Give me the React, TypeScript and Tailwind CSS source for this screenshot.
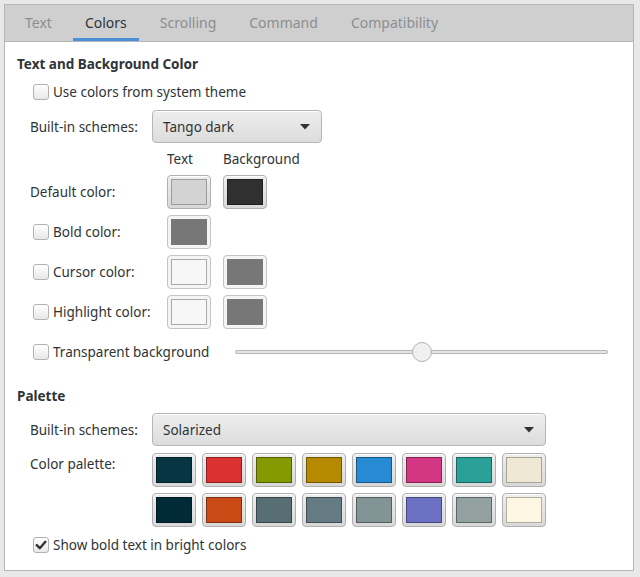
import React from "react";

function Check({ checked }: { checked?: boolean }) {
  return (
    <span className="w-[16px] h-[16px] rounded-[3px] border border-[#b1b3b3] bg-linear-to-b from-white to-[#e8e8e8] flex items-center justify-center shrink-0">
      {checked && (
        <svg width="12" height="12" viewBox="0 0 12 12">
          <path d="M1.8 6.2 L4.8 9.2 L10.4 2.8" stroke="#2e3436" strokeWidth="2.4" fill="none" strokeLinecap="round" strokeLinejoin="round" />
        </svg>
      )}
    </span>
  );
}

function Swatch({ color, edge, dim }: { color: string; edge: string; dim?: boolean }) {
  return (
    <div
      className={`w-[44px] h-[34px] rounded-[4px] border flex items-center justify-center shrink-0 ${
        dim
          ? "border-[#c4c4c4] bg-[#f4f4f4]"
          : "border-[#b0b0b0] bg-linear-to-b from-[#eeeeee] to-[#d8d8d8] shadow-[inset_0_1px_0_#ffffff]"
      }`}
    >
      <div className="w-[36px] h-[26px] border" style={{ backgroundColor: color, borderColor: edge }} />
    </div>
  );
}

function Dropdown({ text, width }: { text: string; width: string }) {
  return (
    <div
      className={`${width} h-[33px] rounded-[4px] border border-[#b6b6b6] bg-linear-to-b from-[#eeeeee] to-[#dcdcdc] shadow-[inset_0_1px_0_#ffffff] flex items-center justify-between pl-[10px] pr-[11px]`}
    >
      <span>{text}</span>
      <svg width="10" height="6" viewBox="0 0 10 6">
        <path d="M0 0 L10 0 L5 5.5 Z" fill="#2e3436" />
      </svg>
    </div>
  );
}

const palette1 = [
  ["#073642", "#04222a"],
  ["#dc322f", "#8a1f1d"],
  ["#859900", "#535f00"],
  ["#b58900", "#715500"],
  ["#268bd2", "#185783"],
  ["#d33682", "#842251"],
  ["#2aa198", "#1a655f"],
  ["#eee8d5", "#a8a496"],
];
const palette2 = [
  ["#002b36", "#001b22"],
  ["#cb4b16", "#7f2f0e"],
  ["#586e75", "#374549"],
  ["#657b83", "#3f4d52"],
  ["#839496", "#525d5e"],
  ["#6c71c4", "#44477b"],
  ["#93a1a1", "#5c6565"],
  ["#fdf6e3", "#b2ada0"],
];

const tabs = ["Text", "Colors", "Scrolling", "Command", "Compatibility"];

export default function App() {
  return (
    <div className="w-[640px] h-[577px] bg-[#e8e8e8] pt-[4px] px-[4px] font-['Noto_Sans',sans-serif] text-[13.5px] leading-[20px] text-[#2e3436]">
      <div className="w-[630px] h-[567px] border border-[#b6b6b6] bg-white flex flex-col">
        <div className="h-[37px] shrink-0 bg-[#cfcfcf] border-b border-[#b6b6b6] flex pl-[8px] gap-[9px] text-[14px]">
          {tabs.map((t) => (
            <div
              key={t}
              className={`h-[36px] px-[12px] flex items-center pt-[3px] border-b-[3px] ${
                t === "Colors" ? "border-[#4a90d9] text-[#2e3436]" : "border-transparent text-[#8b8e8f]"
              }`}
            >
              {t}
            </div>
          ))}
        </div>

        <div className="pl-[12px] pt-[12px] flex flex-col">
          <div className="h-[20px] font-bold">Text and Background Color</div>

          <div className="mt-[8px] h-[20px] flex items-center pl-[16px] gap-[4px]">
            <Check />
            <span>Use colors from system theme</span>
          </div>

          <div className="mt-[8px] h-[33px] flex items-center pl-[13px]">
            <span className="w-[122px]">Built-in schemes:</span>
            <Dropdown text="Tango dark" width="w-[170px]" />
          </div>

          <div className="mt-[6px] h-[20px] flex pl-[150px]">
            <span className="w-[56px]">Text</span>
            <span>Background</span>
          </div>

          <div className="mt-[6px] h-[34px] flex items-center pl-[13px]">
            <span className="w-[137px]">Default color:</span>
            <div className="flex gap-[12px]">
              <Swatch color="#d3d3d3" edge="#9c9c9c" />
              <Swatch color="#303030" edge="#1e1e1e" />
            </div>
          </div>

          <div className="mt-[6px] h-[34px] flex items-center pl-[13px]">
            <span className="w-[137px] flex items-center gap-[4px] pl-[3px]">
              <Check />
              <span>Bold color:</span>
            </span>
            <Swatch color="#777777" edge="#777777" dim />
          </div>

          <div className="mt-[6px] h-[34px] flex items-center pl-[13px]">
            <span className="w-[137px] flex items-center gap-[4px] pl-[3px]">
              <Check />
              <span>Cursor color:</span>
            </span>
            <div className="flex gap-[12px]">
              <Swatch color="#f7f7f7" edge="#ababab" dim />
              <Swatch color="#777777" edge="#777777" dim />
            </div>
          </div>

          <div className="mt-[6px] h-[34px] flex items-center pl-[13px]">
            <span className="w-[137px] flex items-center gap-[4px] pl-[3px]">
              <Check />
              <span>Highlight color:</span>
            </span>
            <div className="flex gap-[12px]">
              <Swatch color="#f7f7f7" edge="#ababab" dim />
              <Swatch color="#777777" edge="#777777" dim />
            </div>
          </div>

          <div className="mt-[6px] h-[34px] flex items-center pl-[13px]">
            <span className="w-[205px] flex items-center gap-[4px] pl-[3px]">
              <Check />
              <span>Transparent background</span>
            </span>
            <div className="relative w-[373px] h-[20px] flex items-center">
              <div className="w-full h-[4px] rounded-full border border-[#b6b6b6] bg-[#e4e4e4]" />
              <div className="absolute left-[177px] top-0 w-[20px] h-[20px] rounded-full border border-[#b3b3b3] bg-[#f0f0f0]" />
            </div>
          </div>

          <div className="mt-[17px] h-[20px] font-bold">Palette</div>

          <div className="mt-[7px] h-[33px] flex items-center pl-[13px]">
            <span className="w-[122px]">Built-in schemes:</span>
            <Dropdown text="Solarized" width="w-[394px]" />
          </div>

          <div className="mt-[7px] flex pl-[13px]">
            <span className="w-[122px] pt-[1px]">Color palette:</span>
            <div className="flex flex-col gap-[6px]">
              <div className="flex gap-[6px]">
                {palette1.map(([c, e]) => (
                  <Swatch key={c} color={c} edge={e} />
                ))}
              </div>
              <div className="flex gap-[6px]">
                {palette2.map(([c, e]) => (
                  <Swatch key={c} color={c} edge={e} />
                ))}
              </div>
            </div>
          </div>

          <div className="mt-[8px] h-[20px] flex items-center pl-[16px] gap-[4px]">
            <Check checked />
            <span>Show bold text in bright colors</span>
          </div>
        </div>
      </div>
    </div>
  );
}
